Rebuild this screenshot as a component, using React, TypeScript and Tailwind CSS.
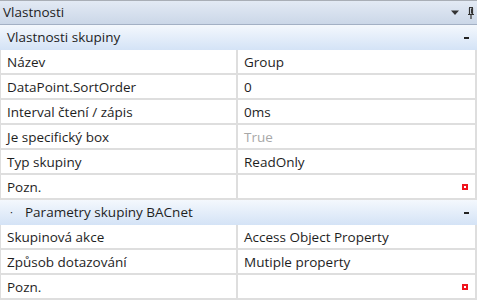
import React from "react";

type Row = { label: string; value: string; muted?: boolean; note?: boolean };

const groups: Array<{ title: string; bullet?: boolean; rows: Row[] }> = [
  {
    title: "Vlastnosti skupiny",
    rows: [
      { label: "Název", value: "Group" },
      { label: "DataPoint.SortOrder", value: "0" },
      { label: "Interval čtení / zápis", value: "0ms" },
      { label: "Je specifický box", value: "True", muted: true },
      { label: "Typ skupiny", value: "ReadOnly" },
      { label: "Pozn.", value: "", note: true },
    ],
  },
  {
    title: "Parametry skupiny BACnet",
    bullet: true,
    rows: [
      { label: "Skupinová akce", value: "Access Object Property" },
      { label: "Způsob dotazování", value: "Mutiple property" },
      { label: "Pozn.", value: "", note: true },
    ],
  },
];

function NoteMark() {
  return <span className="ml-auto mr-[7px] block h-[6px] w-[6px] border-[2px] border-[#f0141e] bg-white" />;
}

export default function App() {
  return (
    <div
      className="flex h-[300px] w-[477px] flex-col overflow-hidden bg-white text-[13.5px] text-[#1e1e1e]"
      style={{ fontFamily: '"Open Sans", "Noto Sans", sans-serif' }}
    >
      {/* panel title */}
      <div className="flex h-[25px] shrink-0 items-center border-t border-b border-t-[#a9aeb6] border-b-[#a3b0c4] bg-gradient-to-b from-[#e3eaf4] to-[#cbd7e8] pl-[3px] pr-[2px]">
        <span className="leading-none">Vlastnosti</span>
        <svg className="ml-auto" width="10" height="6" viewBox="0 0 10 6">
          <path d="M1 0.5h8L5 5z" fill="#333" />
        </svg>
        <svg className="ml-[7px]" width="8" height="12" viewBox="0 0 8 12">
          <path d="M2 0.5h4M2.5 1v6M5.5 1v6M1 7.5h6M4 8v4" stroke="#333" strokeWidth="1.2" fill="none" />
          <path d="M4.5 1.5v5" stroke="#333" strokeWidth="1" />
        </svg>
      </div>

      {groups.map((g) => (
        <div key={g.title}>
          <div className="flex h-[25px] items-center bg-gradient-to-b from-[#f4f8fd] to-[#d4e3f6] pr-[8px]">
            {g.bullet ? (
              <>
                <span className="ml-[10px] w-[15px] text-[11px]">·</span>
                <span>{g.title}</span>
              </>
            ) : (
              <span className="ml-[7px]">{g.title}</span>
            )}
            <span className="ml-auto block h-[2px] w-[5px] bg-[#222]" />
          </div>
          {g.rows.map((r) => (
            <div
              key={r.label + r.value}
              className="grid h-[25px] grid-cols-[237px_1fr] border-b-2 border-l border-r-2 border-[#dedede]"
            >
              <div className="flex items-center border-r-2 border-[#dedede] pl-[6px] pt-px">{r.label}</div>
              <div className={`flex items-center pl-[6px] pt-px ${r.muted ? "text-[#a8a8a8]" : ""}`}>
                {r.value}
                {r.note && <NoteMark />}
              </div>
            </div>
          ))}
        </div>
      ))}
    </div>
  );
}
